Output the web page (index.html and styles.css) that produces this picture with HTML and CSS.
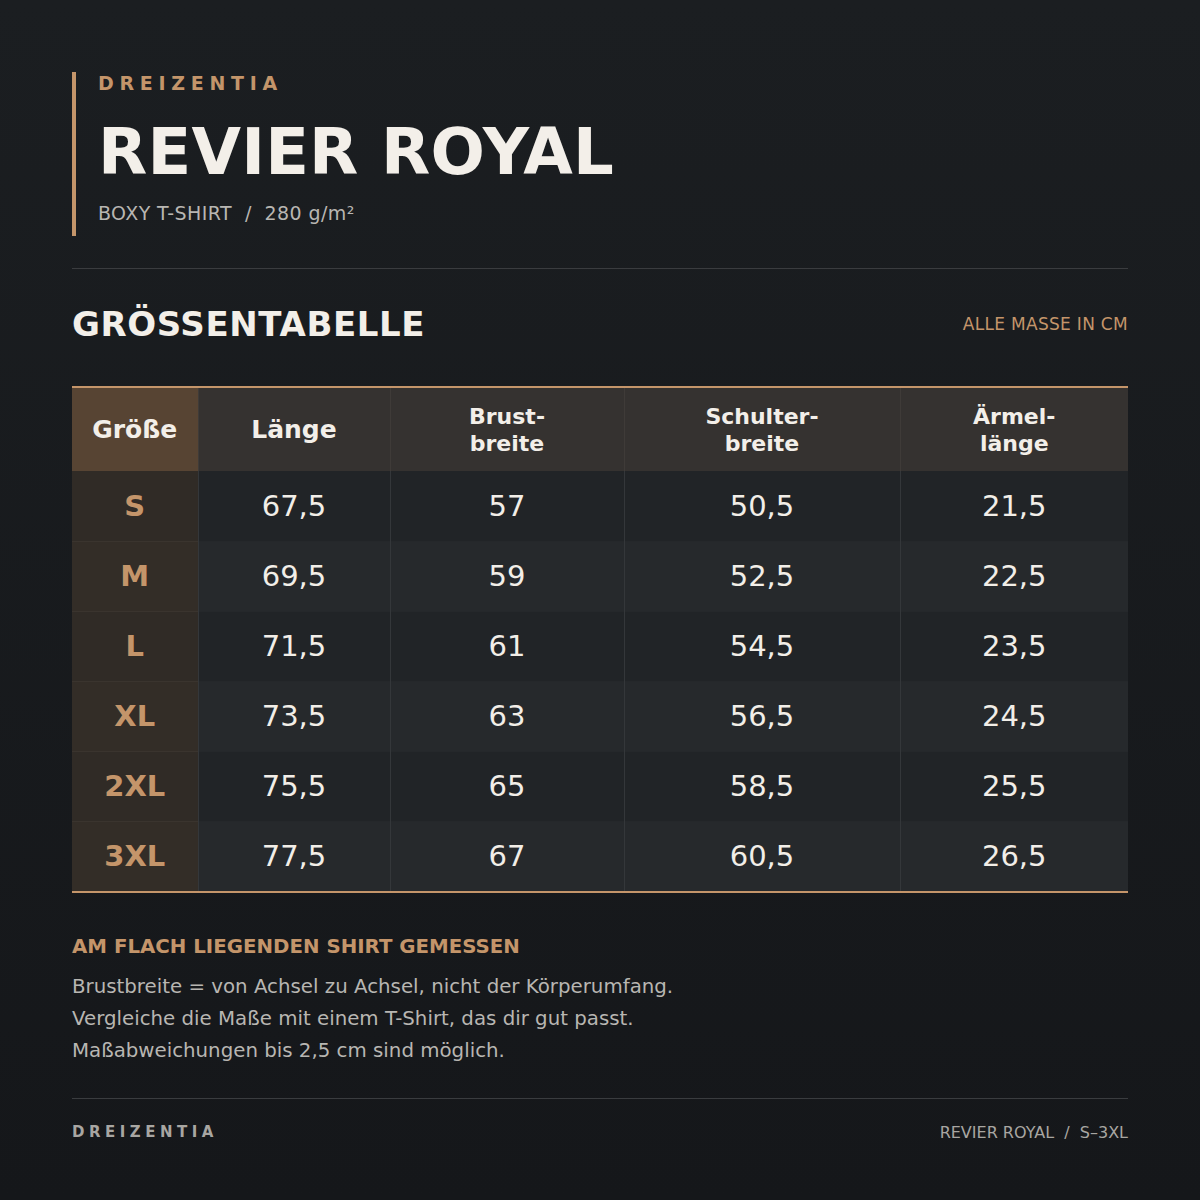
FILE: index.html
```html
<!DOCTYPE html>
<html lang="de">
<head>
<meta charset="utf-8">
<title>Revier Royal – Größentabelle</title>
<link rel="stylesheet" href="styles.css">
</head>
<body>
<div class="page">
  <header class="hero">
    <div class="brand">DREIZENTIA</div>
    <h1 class="title">REVIER ROYAL</h1>
    <div class="subtitle">BOXY T-SHIRT&nbsp; / &nbsp;280 g/m²</div>
  </header>
  <hr class="rule">
  <div class="section-head">
    <h2 class="section-title">GRÖSSENTABELLE</h2>
    <div class="unit">ALLE MASSE IN CM</div>
  </div>
  <div class="table-wrap">
    <table class="sizes">
      <colgroup>
        <col class="c1"><col class="c2"><col class="c3"><col class="c4"><col class="c5">
      </colgroup>
      <thead>
        <tr>
          <th class="size-h single">Größe</th>
          <th class="single">Länge</th>
          <th>Brust-<br>breite</th>
          <th>Schulter-<br>breite</th>
          <th>Ärmel-<br>länge</th>
        </tr>
      </thead>
      <tbody>
        <tr><td class="size">S</td><td>67,5</td><td>57</td><td>50,5</td><td>21,5</td></tr>
        <tr><td class="size">M</td><td>69,5</td><td>59</td><td>52,5</td><td>22,5</td></tr>
        <tr><td class="size">L</td><td>71,5</td><td>61</td><td>54,5</td><td>23,5</td></tr>
        <tr><td class="size">XL</td><td>73,5</td><td>63</td><td>56,5</td><td>24,5</td></tr>
        <tr><td class="size">2XL</td><td>75,5</td><td>65</td><td>58,5</td><td>25,5</td></tr>
        <tr><td class="size">3XL</td><td>77,5</td><td>67</td><td>60,5</td><td>26,5</td></tr>
      </tbody>
    </table>
  </div>
  <section class="notes">
    <h3 class="notes-title">AM FLACH LIEGENDEN SHIRT GEMESSEN</h3>
    <p class="notes-text">Brustbreite = von Achsel zu Achsel, nicht der Körperumfang.<br>Vergleiche die Maße mit einem T-Shirt, das dir gut passt.<br>Maßabweichungen bis 2,5 cm sind möglich.</p>
  </section>
  <hr class="rule rule-foot">
  <footer class="foot">
    <div class="foot-brand">DREIZENTIA</div>
    <div class="foot-meta">REVIER ROYAL&nbsp; / &nbsp;S–3XL</div>
  </footer>
</div>
</body>
</html>
```
FILE: styles.css
```css
* { box-sizing: border-box; }
html, body {
  margin: 0;
  padding: 0;
}
body {
  width: 1200px;
  height: 1200px;
  background: linear-gradient(180deg, #1b1e21 0%, #15171a 100%);
  font-family: "DejaVu Sans", sans-serif;
  color: #f2eee8;
}
.page {
  padding: 72px 72px 0 72px;
}
.hero {
  border-left: 4px solid #c4956a;
  padding-left: 22px;
  height: 164px;
}
.brand {
  font-size: 19px;
  font-weight: bold;
  letter-spacing: 5.7px;
  color: #c4956a;
  line-height: 22px;
}
.title {
  margin: 26px 0 0 0;
  font-size: 64px;
  line-height: 64px;
  letter-spacing: 0.2px;
  font-weight: bold;
  color: #f3efe9;
}
.subtitle {
  margin-top: 18px;
  font-size: 19px;
  line-height: 22px;
  letter-spacing: 0.4px;
  color: #b8b6b2;
}
.rule {
  border: 0;
  height: 1px;
  background: #3a3c3f;
  margin: 32px 0 0 0;
}
.section-head {
  display: flex;
  justify-content: space-between;
  align-items: center;
  height: 117px;
  padding-bottom: 8px;
}
.section-title {
  margin: 0;
  font-size: 34px;
  letter-spacing: 0.6px;
  font-weight: bold;
  color: #f3efe9;
}
.unit {
  font-size: 17px;
  letter-spacing: 0.3px;
  color: #c4956a;
}
.table-wrap {
  border-top: 2px solid #c4956a;
  border-bottom: 2px solid #c4956a;
}
.sizes {
  width: 100%;
  border-collapse: collapse;
  table-layout: fixed;
}
.c1 { width: 126px; }
.c2 { width: 192px; }
.c3 { width: 234px; }
.c4 { width: 276px; }
.c5 { width: 228px; }
.sizes th {
  height: 83px;
  padding: 0;
  background: #353230;
  font-size: 22px;
  line-height: 27px;
  font-weight: bold;
  color: #f3efe9;
  text-align: center;
  border-left: 1px solid #3f3b38;
}
.sizes th.single {
  font-size: 25px;
}
.sizes th.size-h {
  background: #574433;
  border-left: 0;
}
.sizes td {
  height: 70px;
  padding: 0;
  text-align: center;
  font-size: 29px;
  color: #f2eee8;
  background: #212427;
  border-left: 1px solid #34373a;
  border-top: 1px solid #25282b;
}
.sizes tbody tr:nth-child(even) td {
  background: #26292c;
}
.sizes td.size {
  border-left: 0;
  background: #302b26;
  color: #c4956a;
  font-weight: bold;
  border-top: 1px solid #3a342e;
}
.sizes tbody tr:nth-child(even) td.size {
  background: #332d27;
}
.sizes tbody tr:first-child td { border-top: 0; }
.notes {
  padding-top: 42px;
}
.notes-title {
  margin: 0;
  font-size: 19.8px;
  font-weight: bold;
  color: #c4956a;
  line-height: 24px;
}
.notes-text {
  margin: 12px 0 0 0;
  font-size: 19.8px;
  line-height: 32px;
  color: #b8b6b2;
}
.rule-foot {
  margin-top: 31px;
}
.foot {
  display: flex;
  justify-content: space-between;
  align-items: center;
  height: 66px;
}
.foot-brand {
  font-size: 15px;
  font-weight: bold;
  letter-spacing: 4.5px;
  color: #a8a6a2;
}
.foot-meta {
  font-size: 16px;
  color: #a8a6a2;
}
```
